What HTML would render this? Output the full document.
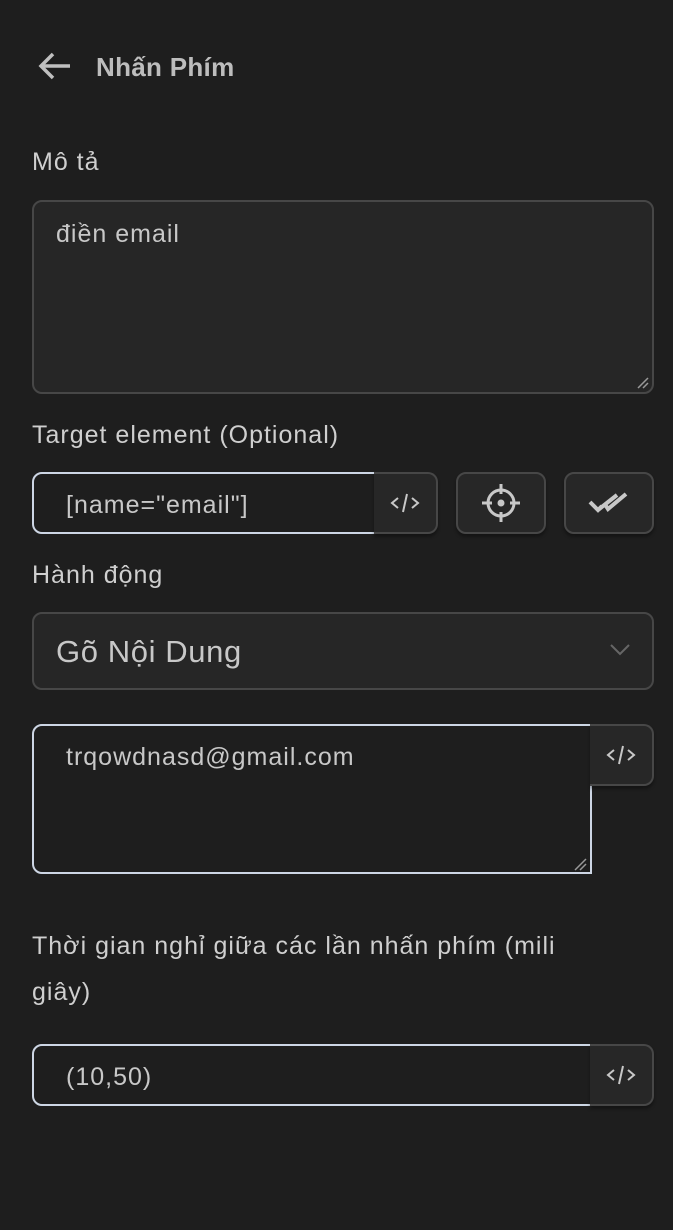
<!DOCTYPE html>
<html><head><meta charset="utf-8"><style>
*{box-sizing:border-box;margin:0;padding:0}
body{width:673px;height:1230px;background:#1e1e1e;font-family:"Liberation Sans","DejaVu Sans",sans-serif;color:#c8c8c8;position:relative;overflow:hidden}
.a{position:absolute}
.lbl{font-size:25px;letter-spacing:1px;color:#cfcfcf;left:32px}
.box{background:#262626;border:2px solid #474747;border-radius:10px}
.foc{background:#1e1e1e;border:2px solid #cdd6e4}
.btn{background:#272727;border:2px solid #474747;border-radius:10px;box-shadow:0 3px 3px rgba(0,0,0,.35);display:flex;align-items:center;justify-content:center}
.txt{font-size:25px;letter-spacing:1px;color:#c8c8c8}
</style></head><body>
<svg class="a" style="left:36px;top:50px" width="38" height="32" viewBox="0 0 38 32"><path d="M34 16H5M17 4L5 16l12 12" fill="none" stroke="#c0c0c0" stroke-width="3.5"/></svg>
<div class="a" style="left:96px;top:52px;font-size:26px;letter-spacing:0.3px;font-weight:bold;color:#bdbdbd">Nhấn Phím</div>

<div class="a lbl" style="top:148px">Mô tả</div>
<div class="a box" style="left:32px;top:200px;width:622px;height:194px"></div>
<div class="a txt" style="left:56px;top:220px">điền email</div>
<svg class="a" style="left:636px;top:376px" width="14" height="14"><path d="M2 12L12 2M7 12L12 7" stroke="#999" stroke-width="1.5"/></svg>

<div class="a lbl" style="top:421px">Target element (Optional)</div>
<div class="a foc" style="left:32px;top:472px;width:344px;height:62px;border-radius:10px 0 0 10px"></div>
<div class="a txt" style="left:66px;top:491px">[name="email"]</div>
<div class="a btn" style="left:374px;top:472px;width:64px;height:62px;border-radius:0 10px 10px 0;border-left:none">
<svg width="32" height="24" viewBox="0 0 32 24"><path d="M9 7L3 12l6 5M23 7l6 5-6 5M18 3l-4 18" fill="none" stroke="#c8c8c8" stroke-width="2"/></svg></div>
<div class="a btn" style="left:456px;top:472px;width:90px;height:62px">
<svg width="44" height="44" viewBox="0 0 44 44"><circle cx="22" cy="22" r="13" fill="none" stroke="#c8c8c8" stroke-width="3"/><circle cx="22" cy="22" r="3.5" fill="#c8c8c8"/><path d="M22 3v10M22 31v10M3 22h10M31 22h10" stroke="#c8c8c8" stroke-width="3"/></svg></div>
<div class="a btn" style="left:564px;top:472px;width:90px;height:62px">
<svg width="44" height="30" viewBox="0 0 44 30"><path d="M3 14l8 8 4-4M11 22L30 7M17 15l4 6 18-15" fill="none" stroke="#c8c8c8" stroke-width="4"/></svg></div>

<div class="a lbl" style="top:561px">Hành động</div>
<div class="a box" style="left:32px;top:612px;width:622px;height:78px"></div>
<div class="a" style="left:56px;top:634px;font-size:31px;letter-spacing:0.6px;color:#c8c8c8">Gõ Nội Dung</div>
<svg class="a" style="left:608px;top:642px" width="24" height="16"><path d="M3 3l9 9 9-9" fill="none" stroke="#666" stroke-width="2"/></svg>

<div class="a foc" style="left:32px;top:724px;width:560px;height:150px;border-radius:10px 0 0 10px"></div>
<div class="a txt" style="left:66px;top:743px">trqowdnasd@gmail.com</div>
<svg class="a" style="left:572px;top:856px" width="16" height="16"><path d="M3 14L14 3M8 14l6-6" stroke="#999" stroke-width="1.5"/></svg>
<div class="a btn" style="left:590px;top:724px;width:64px;height:62px;border-radius:0 10px 10px 0;border-left:none">
<svg width="32" height="24" viewBox="0 0 32 24"><path d="M9 7L3 12l6 5M23 7l6 5-6 5M18 3l-4 18" fill="none" stroke="#c8c8c8" stroke-width="2"/></svg></div>

<div class="a lbl" style="top:923px;width:575px;line-height:46px">Thời gian nghỉ giữa các lần nhấn phím (mili giây)</div>

<div class="a foc" style="left:32px;top:1044px;width:560px;height:62px;border-radius:10px 0 0 10px"></div>
<div class="a txt" style="left:66px;top:1063px">(10,50)</div>
<div class="a btn" style="left:590px;top:1044px;width:64px;height:62px;border-radius:0 10px 10px 0;border-left:none">
<svg width="32" height="24" viewBox="0 0 32 24"><path d="M9 7L3 12l6 5M23 7l6 5-6 5M18 3l-4 18" fill="none" stroke="#c8c8c8" stroke-width="2"/></svg></div>
</body></html>
